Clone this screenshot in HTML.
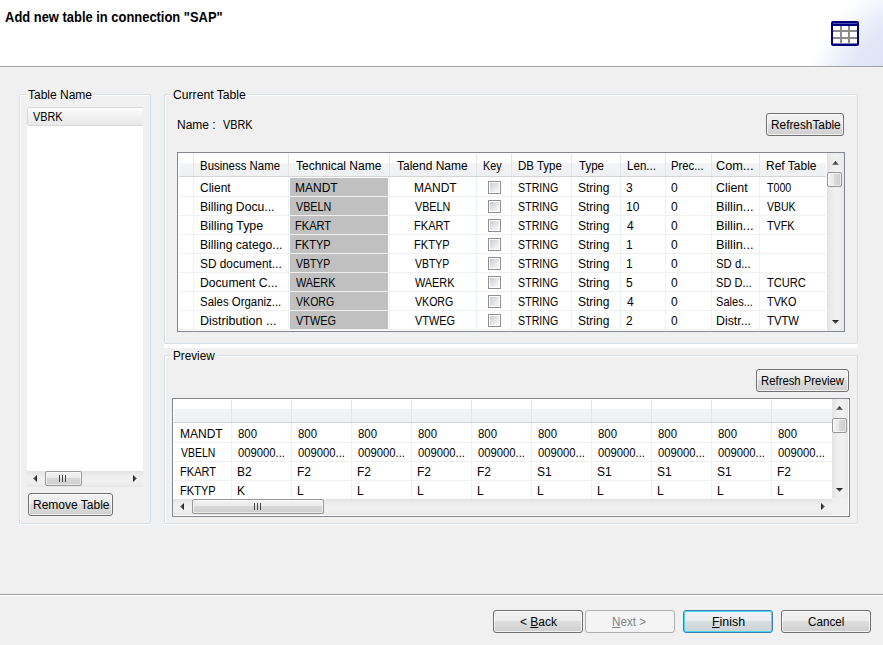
<!DOCTYPE html><html><head><meta charset="utf-8"><style>
*{margin:0;padding:0;box-sizing:border-box}
html,body{width:883px;height:645px;overflow:hidden;background:#f0f0f0;font-family:"Liberation Sans",sans-serif;font-size:12px;color:#000}
div,svg{position:absolute}
.t{white-space:nowrap;line-height:14px}
.grp{border:1px solid #d5dfe5;border-radius:2px;box-shadow:inset 1px 1px 0 #fff,0 1px 0 #fff}
.gl{background:#f0f0f0;height:14px}
.btn{border:1px solid #707070;border-radius:3px;background:linear-gradient(#f2f2f2 0%,#ebebeb 45%,#dddddd 50%,#cfcfcf 100%);box-shadow:inset 0 0 0 1px rgba(255,255,255,.7)}
.tb{border:1px solid #828790;background:#fff;overflow:hidden}
.hs{width:1px;background:#e5e5e5}
.vs{width:1px;background:#eaf2fb}
.hl{height:1px;background:#f0f0f0}
.gc{background:#c0c0c0}
.cb{width:13px;height:13px;border:1px solid #8f8f8f;background:#fff}
.cb::after{content:"";position:absolute;left:1px;top:1px;width:9px;height:9px;background:linear-gradient(135deg,#c6cbd2 0%,#e6e7e9 55%,#f8f8f8 100%)}
.trv{background:linear-gradient(90deg,#e3e3e3,#f0f0f0 40%,#f0f0f0 70%,#e8e8e8)}
.trh{background:linear-gradient(#e3e3e3,#f0f0f0 40%,#f0f0f0 70%,#e8e8e8)}
.thh{border:1px solid #979797;border-radius:2px;background:linear-gradient(#f3f3f3 0%,#e9e9e9 45%,#d9d9d9 50%,#cdcdcd 100%);box-shadow:inset 0 0 0 1px rgba(255,255,255,.6)}
.thv{border:1px solid #979797;border-radius:2px;background:linear-gradient(90deg,#f3f3f3 0%,#e9e9e9 45%,#d9d9d9 50%,#cdcdcd 100%);box-shadow:inset 0 0 0 1px rgba(255,255,255,.6)}
</style></head><body>
<svg width="0" height="0" style="left:0;top:0"><defs><linearGradient id="gv" x1="0" y1="0" x2="0" y2="1"><stop offset="0" stop-color="#1a1a1a"/><stop offset="1" stop-color="#7a7a7a"/></linearGradient><linearGradient id="gh" x1="0" y1="0" x2="1" y2="0"><stop offset="0" stop-color="#1a1a1a"/><stop offset="1" stop-color="#7a7a7a"/></linearGradient><linearGradient id="ghr" x1="1" y1="0" x2="0" y2="0"><stop offset="0" stop-color="#1a1a1a"/><stop offset="1" stop-color="#7a7a7a"/></linearGradient></defs></svg>
<div style="left:0;top:0;width:883px;height:66px;background:#fff;overflow:hidden"><div style="left:0;top:0;width:883px;height:66px;background:radial-gradient(circle at 930px 100px,#dae1f6 0,#dde3f7 55px,#e3e8f8 85px,#ecf0fa 100px,#f6f8fd 112px,#fff 126px)"></div></div>
<div style="left:0;top:66px;width:883px;height:1px;background:#a0a0a0"></div>
<div style="left:0;top:67px;width:883px;height:1px;background:#f6f6f6"></div>
<div class="t" style="left:5px;top:9px;font-weight:bold;font-size:14px;line-height:16px;transform:scaleX(0.923);transform-origin:1px 0">Add new table in connection "SAP"</div>
<svg style="left:831px;top:21px" width="28" height="25" viewBox="0 0 28 25" >
<rect x="0" y="0" width="28" height="25" rx="2" fill="#000080"/>
<rect x="2" y="5" width="24" height="17.5" fill="#fff"/>
<rect x="2" y="2" width="24" height="1" fill="#5050b0"/>
<g fill="#8c8c8c"><rect x="2" y="9" width="24" height="2"/><rect x="2" y="16" width="24" height="2"/><rect x="9" y="5" width="2" height="18"/><rect x="17" y="5" width="2" height="18"/></g>
</svg>
<div class="grp" style="left:19px;top:94px;width:132px;height:430px"></div>
<div class="gl" style="left:26px;top:88px;width:67px"></div>
<div class="t" style="left:28px;top:88px;">Table Name</div>
<div style="left:27px;top:107px;width:116px;height:364px;background:#fff;overflow:hidden"><div style="left:0;top:0;width:140px;height:19px;border:1px solid #d9d9d9;border-radius:2px;background:linear-gradient(#fbfbfb,#e8e8e8)"></div></div>
<div class="t" style="left:33px;top:110px;transform:scaleX(0.9048);transform-origin:0px 0;">VBRK</div>
<div class="trh" style="left:27px;top:471px;width:116px;height:16px"></div>
<svg style="left:33px;top:475px" width="5" height="7"><path d="M4 0 L0 3.5 L4 7 Z" fill="url(#ghr)"/></svg>
<svg style="left:133px;top:475px" width="5" height="7"><path d="M0 0 L4 3.5 L0 7 Z" fill="url(#gh)"/></svg>
<div class="thh" style="left:45px;top:471px;width:37px;height:15px"></div>
<svg style="left:59px;top:475px" width="8" height="8"><g fill="#444"><rect x="0" y="0" width="1" height="7"/><rect x="3" y="0" width="1" height="7"/><rect x="6" y="0" width="1" height="7"/></g></svg>
<div class="btn" style="left:28px;top:493px;width:85px;height:23px"></div>
<div class="t" style="left:33px;top:498px;">Remove Table</div>
<div class="grp" style="left:164px;top:94px;width:694px;height:250px"></div>
<div class="gl" style="left:171px;top:88px;width:76px"></div>
<div class="t" style="left:173px;top:88px;transform:scaleX(1.0142);transform-origin:1px 0;">Current Table</div>
<div class="t" style="left:177px;top:118px;">Name :</div>
<div class="t" style="left:223px;top:118px;transform:scaleX(0.9048);transform-origin:0px 0;">VBRK</div>
<div class="btn" style="left:766px;top:113px;width:78px;height:23px"></div>
<div class="t" style="left:771px;top:118px;transform:scaleX(0.9854);transform-origin:1px 0;">RefreshTable</div>
<div class="tb" style="left:177px;top:152px;width:668px;height:180px">
<div style="left:1px;top:0;width:647px;height:23px;background:linear-gradient(#fff 0,#fff 10px,#f3f4f6 10px,#eff0f2 100%)"></div>
<div style="left:1px;top:23px;width:647px;height:1px;background:#d5d5d5"></div>
<div class="hs" style="left:15px;top:1px;height:22px"></div>
<div class="hs" style="left:110px;top:1px;height:22px"></div>
<div class="hs" style="left:211px;top:1px;height:22px"></div>
<div class="hs" style="left:298px;top:1px;height:22px"></div>
<div class="hs" style="left:333px;top:1px;height:22px"></div>
<div class="hs" style="left:393px;top:1px;height:22px"></div>
<div class="hs" style="left:442px;top:1px;height:22px"></div>
<div class="hs" style="left:487px;top:1px;height:22px"></div>
<div class="hs" style="left:533px;top:1px;height:22px"></div>
<div class="hs" style="left:581px;top:1px;height:22px"></div>
<div class="t" style="left:22px;top:6px;transform:scaleX(0.9515);transform-origin:1px 0;">Business Name</div>
<div class="t" style="left:118px;top:6px;">Technical Name</div>
<div class="t" style="left:219px;top:6px;">Talend Name</div>
<div class="t" style="left:305px;top:6px;transform:scaleX(0.8974);transform-origin:1px 0;">Key</div>
<div class="t" style="left:340px;top:6px;transform:scaleX(0.9551);transform-origin:1px 0;">DB Type</div>
<div class="t" style="left:401px;top:6px;transform:scaleX(0.9608);transform-origin:0px 0;">Type</div>
<div class="t" style="left:449px;top:6px;transform:scaleX(0.9636);transform-origin:1px 0;">Len...</div>
<div class="t" style="left:493px;top:6px;transform:scaleX(0.9385);transform-origin:1px 0;">Prec...</div>
<div class="t" style="left:538px;top:6px;transform:scaleX(1.0615);transform-origin:1px 0;">Com...</div>
<div class="t" style="left:588px;top:6px;">Ref Table</div>
<div class="gc" style="left:112px;top:25px;width:98px;height:18px"></div>
<div class="hl" style="left:1px;top:43px;width:647px"></div>
<div class="t" style="left:22px;top:28px;">Client</div>
<div class="t" style="left:117px;top:28px;">MANDT</div>
<div class="t" style="left:236px;top:28px;">MANDT</div>
<div class="t" style="left:340px;top:28px;transform:scaleX(0.8851);transform-origin:1px 0;">STRING</div>
<div class="t" style="left:400px;top:28px;">String</div>
<div class="t" style="left:448px;top:28px;">3</div>
<div class="t" style="left:493px;top:28px;">0</div>
<div class="t" style="left:538px;top:28px;transform:scaleX(1.0339);transform-origin:1px 0;">Client</div>
<div class="t" style="left:589px;top:28px;transform:scaleX(0.8868);transform-origin:0px 0;">T000</div>
<div class="cb" style="left:310px;top:28px"></div>
<div class="gc" style="left:112px;top:44px;width:98px;height:18px"></div>
<div class="hl" style="left:1px;top:62px;width:647px"></div>
<div class="t" style="left:22px;top:47px;transform:scaleX(1.0142);transform-origin:1px 0;">Billing Docu...</div>
<div class="t" style="left:118px;top:47px;transform:scaleX(0.8961);transform-origin:0px 0;">VBELN</div>
<div class="t" style="left:237px;top:47px;transform:scaleX(0.8961);transform-origin:0px 0;">VBELN</div>
<div class="t" style="left:340px;top:47px;transform:scaleX(0.8851);transform-origin:1px 0;">STRING</div>
<div class="t" style="left:400px;top:47px;">String</div>
<div class="t" style="left:448px;top:47px;">10</div>
<div class="t" style="left:493px;top:47px;">0</div>
<div class="t" style="left:538px;top:47px;transform:scaleX(1.0615);transform-origin:1px 0;">Billin...</div>
<div class="t" style="left:589px;top:47px;transform:scaleX(0.8730);transform-origin:0px 0;">VBUK</div>
<div class="cb" style="left:310px;top:47px"></div>
<div class="gc" style="left:112px;top:63px;width:98px;height:18px"></div>
<div class="hl" style="left:1px;top:81px;width:647px"></div>
<div class="t" style="left:22px;top:66px;transform:scaleX(1.0336);transform-origin:1px 0;">Billing Type</div>
<div class="t" style="left:117px;top:66px;transform:scaleX(0.9200);transform-origin:1px 0;">FKART</div>
<div class="t" style="left:236px;top:66px;transform:scaleX(0.9200);transform-origin:1px 0;">FKART</div>
<div class="t" style="left:340px;top:66px;transform:scaleX(0.8851);transform-origin:1px 0;">STRING</div>
<div class="t" style="left:400px;top:66px;">String</div>
<div class="t" style="left:449px;top:66px;">4</div>
<div class="t" style="left:493px;top:66px;">0</div>
<div class="t" style="left:538px;top:66px;transform:scaleX(1.0615);transform-origin:1px 0;">Billin...</div>
<div class="t" style="left:589px;top:66px;transform:scaleX(0.8983);transform-origin:0px 0;">TVFK</div>
<div class="cb" style="left:310px;top:66px"></div>
<div class="gc" style="left:112px;top:82px;width:98px;height:18px"></div>
<div class="hl" style="left:1px;top:100px;width:647px"></div>
<div class="t" style="left:22px;top:85px;transform:scaleX(1.0127);transform-origin:1px 0;">Billing catego...</div>
<div class="t" style="left:117px;top:85px;transform:scaleX(0.9178);transform-origin:1px 0;">FKTYP</div>
<div class="t" style="left:236px;top:85px;transform:scaleX(0.9178);transform-origin:1px 0;">FKTYP</div>
<div class="t" style="left:340px;top:85px;transform:scaleX(0.8851);transform-origin:1px 0;">STRING</div>
<div class="t" style="left:400px;top:85px;">String</div>
<div class="t" style="left:448px;top:85px;">1</div>
<div class="t" style="left:493px;top:85px;">0</div>
<div class="t" style="left:538px;top:85px;transform:scaleX(1.0615);transform-origin:1px 0;">Billin...</div>
<div class="cb" style="left:310px;top:85px"></div>
<div class="gc" style="left:112px;top:101px;width:98px;height:18px"></div>
<div class="hl" style="left:1px;top:119px;width:647px"></div>
<div class="t" style="left:22px;top:104px;transform:scaleX(0.9876);transform-origin:1px 0;">SD document...</div>
<div class="t" style="left:118px;top:104px;transform:scaleX(0.8701);transform-origin:0px 0;">VBTYP</div>
<div class="t" style="left:237px;top:104px;transform:scaleX(0.8701);transform-origin:0px 0;">VBTYP</div>
<div class="t" style="left:340px;top:104px;transform:scaleX(0.8851);transform-origin:1px 0;">STRING</div>
<div class="t" style="left:400px;top:104px;">String</div>
<div class="t" style="left:448px;top:104px;">1</div>
<div class="t" style="left:493px;top:104px;">0</div>
<div class="t" style="left:538px;top:104px;transform:scaleX(0.9420);transform-origin:1px 0;">SD d...</div>
<div class="cb" style="left:310px;top:104px"></div>
<div class="gc" style="left:112px;top:120px;width:98px;height:18px"></div>
<div class="hl" style="left:1px;top:138px;width:647px"></div>
<div class="t" style="left:22px;top:123px;transform:scaleX(1.0134);transform-origin:1px 0;">Document C...</div>
<div class="t" style="left:118px;top:123px;transform:scaleX(0.9059);transform-origin:0px 0;">WAERK</div>
<div class="t" style="left:237px;top:123px;transform:scaleX(0.9059);transform-origin:0px 0;">WAERK</div>
<div class="t" style="left:340px;top:123px;transform:scaleX(0.8851);transform-origin:1px 0;">STRING</div>
<div class="t" style="left:400px;top:123px;">String</div>
<div class="t" style="left:448px;top:123px;">5</div>
<div class="t" style="left:493px;top:123px;">0</div>
<div class="t" style="left:538px;top:123px;transform:scaleX(0.9178);transform-origin:1px 0;">SD D...</div>
<div class="t" style="left:589px;top:123px;transform:scaleX(0.9259);transform-origin:0px 0;">TCURC</div>
<div class="cb" style="left:310px;top:123px"></div>
<div class="gc" style="left:112px;top:139px;width:98px;height:18px"></div>
<div class="hl" style="left:1px;top:157px;width:647px"></div>
<div class="t" style="left:22px;top:142px;transform:scaleX(0.9515);transform-origin:1px 0;">Sales Organiz...</div>
<div class="t" style="left:118px;top:142px;transform:scaleX(0.8824);transform-origin:0px 0;">VKORG</div>
<div class="t" style="left:237px;top:142px;transform:scaleX(0.8824);transform-origin:0px 0;">VKORG</div>
<div class="t" style="left:340px;top:142px;transform:scaleX(0.8851);transform-origin:1px 0;">STRING</div>
<div class="t" style="left:400px;top:142px;">String</div>
<div class="t" style="left:449px;top:142px;">4</div>
<div class="t" style="left:493px;top:142px;">0</div>
<div class="t" style="left:538px;top:142px;transform:scaleX(0.9200);transform-origin:1px 0;">Sales...</div>
<div class="t" style="left:589px;top:142px;transform:scaleX(0.9048);transform-origin:0px 0;">TVKO</div>
<div class="cb" style="left:310px;top:142px"></div>
<div class="gc" style="left:112px;top:158px;width:98px;height:18px"></div>
<div class="hl" style="left:1px;top:176px;width:647px"></div>
<div class="t" style="left:22px;top:161px;transform:scaleX(1.0426);transform-origin:1px 0;">Distribution ...</div>
<div class="t" style="left:118px;top:161px;transform:scaleX(0.9059);transform-origin:0px 0;">VTWEG</div>
<div class="t" style="left:237px;top:161px;transform:scaleX(0.9059);transform-origin:0px 0;">VTWEG</div>
<div class="t" style="left:340px;top:161px;transform:scaleX(0.8851);transform-origin:1px 0;">STRING</div>
<div class="t" style="left:400px;top:161px;">String</div>
<div class="t" style="left:448px;top:161px;">2</div>
<div class="t" style="left:493px;top:161px;">0</div>
<div class="t" style="left:538px;top:161px;transform:scaleX(1.0317);transform-origin:1px 0;">Distr...</div>
<div class="t" style="left:589px;top:161px;transform:scaleX(0.9403);transform-origin:0px 0;">TVTW</div>
<div class="cb" style="left:310px;top:161px"></div>
<div class="vs" style="left:15px;top:24px;height:153px"></div>
<div class="vs" style="left:110px;top:24px;height:153px"></div>
<div class="vs" style="left:211px;top:24px;height:153px"></div>
<div class="vs" style="left:298px;top:24px;height:153px"></div>
<div class="vs" style="left:333px;top:24px;height:153px"></div>
<div class="vs" style="left:393px;top:24px;height:153px"></div>
<div class="vs" style="left:442px;top:24px;height:153px"></div>
<div class="vs" style="left:487px;top:24px;height:153px"></div>
<div class="vs" style="left:533px;top:24px;height:153px"></div>
<div class="vs" style="left:581px;top:24px;height:153px"></div>
<div class="trv" style="left:649px;top:0px;width:17px;height:178px"></div>
<svg style="left:654px;top:8px" width="7" height="5"><path d="M0 4 L3.5 0 L7 4 Z" fill="url(#gv)"/></svg>
<svg style="left:654px;top:167px" width="7" height="5"><path d="M0 0 L3.5 4 L7 0 Z" fill="url(#gv)"/></svg>
<div class="thv" style="left:649px;top:19px;width:15px;height:15px"></div>
</div>
<div style="left:164px;top:345px;width:694px;height:3px;background:#fff"></div>
<div class="grp" style="left:164px;top:355px;width:694px;height:169px"></div>
<div class="gl" style="left:171px;top:349px;width:46px"></div>
<div class="t" style="left:173px;top:349px;transform:scaleX(0.9759);transform-origin:1px 0;">Preview</div>
<div class="btn" style="left:756px;top:369px;width:93px;height:23px"></div>
<div class="t" style="left:761px;top:374px;transform:scaleX(0.9422);transform-origin:1px 0;">Refresh Preview</div>
<div class="tb" style="left:172px;top:398px;width:678px;height:119px">
<div style="left:1px;top:0;width:658px;height:23px;background:linear-gradient(#fff 0,#fff 10px,#f3f4f6 10px,#eff0f2 100%)"></div>
<div style="left:1px;top:23px;width:658px;height:1px;background:#d5d5d5"></div>
<div class="hs" style="left:58px;top:1px;height:22px"></div>
<div class="hs" style="left:118px;top:1px;height:22px"></div>
<div class="hs" style="left:178px;top:1px;height:22px"></div>
<div class="hs" style="left:238px;top:1px;height:22px"></div>
<div class="hs" style="left:298px;top:1px;height:22px"></div>
<div class="hs" style="left:358px;top:1px;height:22px"></div>
<div class="hs" style="left:418px;top:1px;height:22px"></div>
<div class="hs" style="left:478px;top:1px;height:22px"></div>
<div class="hs" style="left:538px;top:1px;height:22px"></div>
<div class="hs" style="left:598px;top:1px;height:22px"></div>
<div class="hl" style="left:1px;top:43px;width:658px"></div>
<div class="t" style="left:7px;top:28px;">MANDT</div>
<div class="t" style="left:65px;top:28px;transform:scaleX(0.9487);transform-origin:0px 0;">800</div>
<div class="t" style="left:125px;top:28px;transform:scaleX(0.9487);transform-origin:0px 0;">800</div>
<div class="t" style="left:185px;top:28px;transform:scaleX(0.9487);transform-origin:0px 0;">800</div>
<div class="t" style="left:245px;top:28px;transform:scaleX(0.9487);transform-origin:0px 0;">800</div>
<div class="t" style="left:305px;top:28px;transform:scaleX(0.9487);transform-origin:0px 0;">800</div>
<div class="t" style="left:365px;top:28px;transform:scaleX(0.9487);transform-origin:0px 0;">800</div>
<div class="t" style="left:425px;top:28px;transform:scaleX(0.9487);transform-origin:0px 0;">800</div>
<div class="t" style="left:485px;top:28px;transform:scaleX(0.9487);transform-origin:0px 0;">800</div>
<div class="t" style="left:545px;top:28px;transform:scaleX(0.9487);transform-origin:0px 0;">800</div>
<div class="t" style="left:605px;top:28px;transform:scaleX(0.9487);transform-origin:0px 0;">800</div>
<div class="hl" style="left:1px;top:62px;width:658px"></div>
<div class="t" style="left:8px;top:47px;transform:scaleX(0.8701);transform-origin:0px 0;">VBELN</div>
<div class="t" style="left:65px;top:47px;transform:scaleX(0.9381);transform-origin:0px 0;">009000...</div>
<div class="t" style="left:125px;top:47px;transform:scaleX(0.9381);transform-origin:0px 0;">009000...</div>
<div class="t" style="left:185px;top:47px;transform:scaleX(0.9381);transform-origin:0px 0;">009000...</div>
<div class="t" style="left:245px;top:47px;transform:scaleX(0.9381);transform-origin:0px 0;">009000...</div>
<div class="t" style="left:305px;top:47px;transform:scaleX(0.9381);transform-origin:0px 0;">009000...</div>
<div class="t" style="left:365px;top:47px;transform:scaleX(0.9381);transform-origin:0px 0;">009000...</div>
<div class="t" style="left:425px;top:47px;transform:scaleX(0.9381);transform-origin:0px 0;">009000...</div>
<div class="t" style="left:485px;top:47px;transform:scaleX(0.9381);transform-origin:0px 0;">009000...</div>
<div class="t" style="left:545px;top:47px;transform:scaleX(0.9381);transform-origin:0px 0;">009000...</div>
<div class="t" style="left:605px;top:47px;transform:scaleX(0.9381);transform-origin:0px 0;">009000...</div>
<div class="hl" style="left:1px;top:81px;width:658px"></div>
<div class="t" style="left:7px;top:66px;transform:scaleX(0.9200);transform-origin:1px 0;">FKART</div>
<div class="t" style="left:64px;top:66px;">B2</div>
<div class="t" style="left:124px;top:66px;">F2</div>
<div class="t" style="left:184px;top:66px;">F2</div>
<div class="t" style="left:244px;top:66px;">F2</div>
<div class="t" style="left:304px;top:66px;">F2</div>
<div class="t" style="left:364px;top:66px;">S1</div>
<div class="t" style="left:424px;top:66px;">S1</div>
<div class="t" style="left:484px;top:66px;">S1</div>
<div class="t" style="left:544px;top:66px;">S1</div>
<div class="t" style="left:604px;top:66px;">F2</div>
<div class="hl" style="left:1px;top:100px;width:658px"></div>
<div class="t" style="left:7px;top:85px;transform:scaleX(0.9178);transform-origin:1px 0;">FKTYP</div>
<div class="t" style="left:64px;top:85px;">K</div>
<div class="t" style="left:124px;top:85px;">L</div>
<div class="t" style="left:184px;top:85px;">L</div>
<div class="t" style="left:244px;top:85px;">L</div>
<div class="t" style="left:304px;top:85px;">L</div>
<div class="t" style="left:364px;top:85px;">L</div>
<div class="t" style="left:424px;top:85px;">L</div>
<div class="t" style="left:484px;top:85px;">L</div>
<div class="t" style="left:544px;top:85px;">L</div>
<div class="t" style="left:604px;top:85px;">L</div>
<div class="vs" style="left:58px;top:24px;height:80px"></div>
<div class="vs" style="left:118px;top:24px;height:80px"></div>
<div class="vs" style="left:178px;top:24px;height:80px"></div>
<div class="vs" style="left:238px;top:24px;height:80px"></div>
<div class="vs" style="left:298px;top:24px;height:80px"></div>
<div class="vs" style="left:358px;top:24px;height:80px"></div>
<div class="vs" style="left:418px;top:24px;height:80px"></div>
<div class="vs" style="left:478px;top:24px;height:80px"></div>
<div class="vs" style="left:538px;top:24px;height:80px"></div>
<div class="vs" style="left:598px;top:24px;height:80px"></div>
<div class="trv" style="left:659px;top:0px;width:16px;height:99px"></div>
<svg style="left:663px;top:7px" width="7" height="5"><path d="M0 4 L3.5 0 L7 4 Z" fill="url(#gv)"/></svg>
<svg style="left:663px;top:89px" width="7" height="5"><path d="M0 0 L3.5 4 L7 0 Z" fill="url(#gv)"/></svg>
<div class="thv" style="left:659px;top:19px;width:15px;height:15px"></div>
<div class="trh" style="left:0px;top:100px;width:659px;height:16px"></div>
<div style="left:659px;top:99px;width:16px;height:17px;background:#f0f0f0"></div>
<svg style="left:7px;top:104px" width="5" height="7"><path d="M4 0 L0 3.5 L4 7 Z" fill="url(#ghr)"/></svg>
<svg style="left:648px;top:104px" width="5" height="7"><path d="M0 0 L4 3.5 L0 7 Z" fill="url(#gh)"/></svg>
<div class="thh" style="left:19px;top:100px;width:132px;height:15px"></div>
<svg style="left:81px;top:104px" width="8" height="8"><g fill="#444"><rect x="0" y="0" width="1" height="7"/><rect x="3" y="0" width="1" height="7"/><rect x="6" y="0" width="1" height="7"/></g></svg>
</div>
<div style="left:0;top:594px;width:883px;height:1px;background:#a0a0a0"></div>
<div style="left:0;top:595px;width:883px;height:1px;background:#fff"></div>
<div class="btn" style="left:493px;top:610px;width:90px;height:23px"></div>
<div class="t" style="left:520px;top:615px;">&lt; <u>B</u>ack</div>
<div class="btn" style="left:585px;top:610px;width:90px;height:23px;border-color:#adb2b5;background:#f4f4f4;box-shadow:none"></div>
<div class="t" style="left:612px;top:615px;transform:scaleX(0.9701);transform-origin:1px 0;color:#838383"><u>N</u>ext &gt;</div>
<div class="btn" style="left:683px;top:610px;width:90px;height:23px;border-color:#3c7fb1;box-shadow:inset 0 0 0 1px #48d8fb;background:linear-gradient(#f1f3f5 0%,#e9ecef 45%,#d9dee3 50%,#cdd2d7 100%)"></div>
<div class="t" style="left:712px;top:615px;transform:scaleX(1.0339);transform-origin:1px 0;"><u>F</u>inish</div>
<div class="btn" style="left:781px;top:610px;width:90px;height:23px"></div>
<div class="t" style="left:808px;top:615px;transform:scaleX(0.9718);transform-origin:1px 0;">Cancel</div>
</body></html>
